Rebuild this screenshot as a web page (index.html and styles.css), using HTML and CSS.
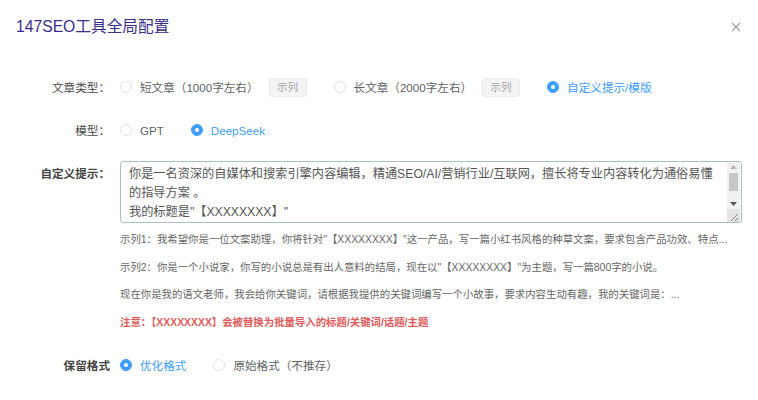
FILE: index.html
```html
<!DOCTYPE html>
<html lang="zh-CN">
<head>
<meta charset="utf-8">
<title>147SEO工具全局配置</title>
<link rel="stylesheet" href="styles.css">
</head>
<body>
<div class="dialog">
  <div class="header">
    <div class="title">147SEO工具全局配置</div>
    <svg class="close" width="10" height="10" viewBox="0 0 10 10"><path d="M1 1L9 9M9 1L1 9" stroke="#9a9a9a" stroke-width="1.1" fill="none"/></svg>
  </div>

  <div class="form">
    <div class="row r1">
      <div class="label">文章类型：</div>
      <div class="options">
        <span class="opt"><span class="radio"></span><span class="otext">短文章（1000字左右）</span><span class="btn">示列</span></span>
        <span class="opt"><span class="radio"></span><span class="otext">长文章（2000字左右）</span><span class="btn">示列</span></span>
        <span class="opt on"><span class="radio"></span><span class="otext">自定义提示/模版</span></span>
      </div>
    </div>

    <div class="row r2">
      <div class="label">模型：</div>
      <div class="options">
        <span class="opt"><span class="radio"></span><span class="otext">GPT</span></span>
        <span class="opt on"><span class="radio"></span><span class="otext">DeepSeek</span></span>
      </div>
    </div>

    <div class="row r3">
      <div class="label strong">自定义提示：</div>
      <div class="field">
        <div class="prompt-box">
          <textarea class="prompt">你是一名资深的自媒体和搜索引擎内容编辑，精通SEO/AI/营销行业/互联网，擅长将专业内容转化为通俗易懂
的指导方案 。
我的标题是"【XXXXXXXX】"
要求：
1. 文章结构清晰，层次分明；
2. 语言通俗易懂，富有感染力；
3. 字数控制在1500字左右。</textarea>
          <div class="sbar">
            <div class="sb-btn"><svg width="7" height="4" viewBox="0 0 7 4"><path d="M0 4L3.5 0L7 4Z" fill="#b5b5b5"/></svg></div>
            <div class="sb-thumb"></div>
            <div class="sb-track"></div>
            <div class="sb-btn"><svg width="7" height="4" viewBox="0 0 7 4"><path d="M0 0L7 0L3.5 4Z" fill="#555"/></svg></div>
            <div class="sb-grip"><svg width="12" height="13" viewBox="0 0 12 13"><path d="M11 5L4 12M11 9L8 12" stroke="#8a8a8a" stroke-width="1" fill="none"/></svg></div>
          </div>
        </div>
        <div class="examples">
          <p>示列1：我希望你是一位文案助理，你将针对"【XXXXXXXX】"这一产品，写一篇小红书风格的种草文案，要求包含产品功效、特点...</p>
          <p>示列2：你是一个小说家，你写的小说总是有出人意料的结局，现在以"【XXXXXXXX】"为主题，写一篇800字的小说。</p>
          <p>现在你是我的语文老师，我会给你关键词，请根据我提供的关键词编写一个小故事，要求内容生动有趣，我的关键词是：...</p>
          <p class="note">注意：【XXXXXXXX】会被替换为批量导入的标题/关键词/话题/主题</p>
        </div>
      </div>
    </div>

    <div class="row r4">
      <div class="label strong">保留格式</div>
      <div class="options">
        <span class="opt on"><span class="radio"></span><span class="otext">优化格式</span></span>
        <span class="opt"><span class="radio"></span><span class="otext">原始格式（不推存）</span></span>
      </div>
    </div>
  </div>
</div>
</body>
</html>
```

FILE: styles.css
```css
* { box-sizing: border-box; }
html, body {
  margin: 0;
  padding: 0;
  background: #ffffff;
}
body {
  font-family: "Liberation Sans", "Noto Sans CJK SC", sans-serif;
  color: #555;
  width: 758px;
  height: 400px;
  overflow: hidden;
}
.header {
  display: flex;
  justify-content: space-between;
  align-items: center;
  padding: 16px 17px 0 16px;
  height: 38px;
}
.title {
  font-size: 15.7px;
  line-height: 22px;
  color: #3b2e8e;
}
.close {
  display: block;
}
.form {
  padding-top: 35px;
}
.row {
  display: flex;
  align-items: center;
}
.label {
  width: 110px;
  flex: none;
  text-align: right;
  font-size: 11.6px;
  color: #4a4a4a;
  margin-right: 10px;
}
.label.strong {
  font-weight: 600;
  color: #444;
}
.r1, .r2, .r4 { height: 28px; }
.r2 { margin-top: 15px; }
.r3 {
  margin-top: 17px;
  align-items: flex-start;
}
.r3 .label { line-height: 26px; }
.r4 { margin-top: 14px; }
.options {
  display: flex;
  align-items: center;
}
.opt {
  display: inline-flex;
  align-items: center;
  margin-right: 27px;
}
.radio {
  width: 12px;
  height: 12px;
  border-radius: 50%;
  border: 1px solid #e0e2e6;
  background: #fff;
  margin-right: 8px;
  flex: none;
}
.opt.on .radio {
  background: #409eff;
  border-color: #409eff;
  position: relative;
}
.opt.on .radio::after {
  content: "";
  position: absolute;
  left: 50%;
  top: 50%;
  width: 4px;
  height: 4px;
  margin: -2px 0 0 -2px;
  border-radius: 50%;
  background: #fff;
}
.otext {
  font-size: 11.6px;
  color: #606266;
  white-space: nowrap;
}
.opt.on .otext { color: #409eff; }
.btn {
  display: inline-block;
  margin-left: 10px;
  width: 38px;
  height: 19px;
  line-height: 17px;
  text-align: center;
  font-size: 10.5px;
  color: #a0a3a8;
  background: #f4f4f5;
  border: 1px solid #ebebed;
  border-radius: 3px;
}
.field {
  width: 622px;
}
.prompt-box {
  display: flex;
  width: 622px;
  height: 62px;
  border: 1px solid #a8c1c8;
  border-radius: 3px;
  overflow: hidden;
  background: #fff;
}
.prompt {
  flex: 1;
  display: block;
  margin: 0;
  padding: 3px 8px;
  border: 0;
  font-family: "Liberation Sans", "Noto Sans CJK SC", sans-serif;
  font-size: 12.2px;
  line-height: 19px;
  color: #555;
  resize: none;
  overflow: hidden;
  outline: none;
  background: transparent;
}
.sbar {
  width: 13px;
  flex: none;
  display: flex;
  flex-direction: column;
  background: #f1f1f1;
  margin: 0 1px 0 0;
}
.sb-btn {
  height: 10px;
  display: flex;
  align-items: center;
  justify-content: center;
}
.sb-thumb {
  height: 18px;
  margin: 1px 2px 0;
  background: #c8c8c8;
}
.sb-track {
  flex: 1;
}
.sb-grip {
  height: 13px;
  background: #e4e4e4;
}
.sb-grip svg { display: block; }
.examples {
  margin-top: 3px;
}
.examples p {
  margin: 0;
  font-size: 10.4px;
  line-height: 27.7px;
  color: #666;
  white-space: nowrap;
}
.examples p.note {
  color: #e05b5b;
  font-weight: bold;
}
```
